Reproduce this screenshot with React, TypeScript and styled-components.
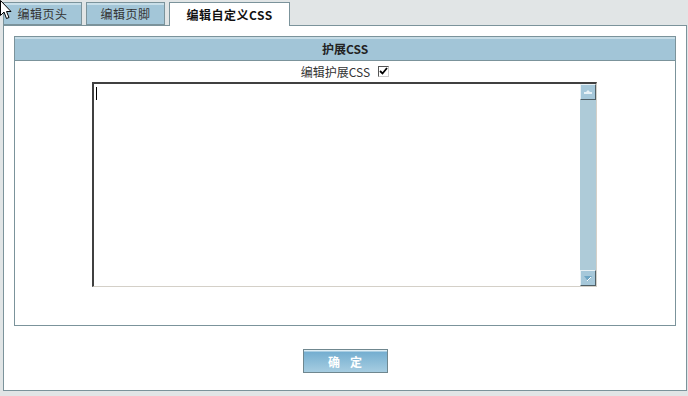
import React from "react";
import styled, { createGlobalStyle } from "styled-components";

const GlobalStyle = createGlobalStyle`
  html, body {
    margin: 0;
    padding: 0;
    background: #e1e5e6;
    font-family: "Noto Sans CJK SC", "DejaVu Sans", sans-serif;
    font-size: 12px;
    color: #222;
  }
`;

const Page = styled.div`
  position: relative;
  width: 688px;
  height: 396px;
  padding: 2px 0 0 3px;
  box-sizing: border-box;
`;

const TabBar = styled.div`
  display: flex;
  gap: 4px;
  height: 23px;
  position: relative;
  z-index: 1;
`;

const Tab = styled.div<{ active?: boolean; w: number }>`
  width: ${(p) => p.w}px;
  height: ${(p) => (p.active ? 24 : 23)}px;
  box-sizing: border-box;
  border: 1px solid #7b939b;
  border-bottom: ${(p) => (p.active ? "none" : "1px solid #7b939b")};
  background: ${(p) =>
    p.active ? "#fff" : "linear-gradient(#c9dfe9 0, #c9dfe9 2px, #a3c6d8 2px)"};
  display: flex;
  align-items: center;
  justify-content: center;
  font-size: 12px;
  font-weight: ${(p) => (p.active ? "bold" : "normal")};
  color: ${(p) => (p.active ? "#111" : "#333")};
  letter-spacing: 0.5px;
`;

const Panel = styled.div`
  width: 684px;
  height: 366px;
  box-sizing: border-box;
  border: 1px solid #7b939b;
  background: #fff;
  padding: 10px;
  display: flex;
  flex-direction: column;
`;

const Section = styled.div`
  height: 290px;
  box-sizing: border-box;
  border: 1px solid #7b939b;
  display: flex;
  flex-direction: column;
  align-items: center;
`;

const SectionHeader = styled.div`
  align-self: stretch;
  height: 24px;
  box-sizing: border-box;
  border-bottom: 1px solid #7b939b;
  background: linear-gradient(#c6dce6 0, #c6dce6 2px, #a2c5d7 2px);
  display: flex;
  align-items: center;
  justify-content: center;
  font-weight: bold;
  color: #222;
`;

const OptionRow = styled.label`
  height: 21px;
  display: flex;
  align-items: center;
  gap: 8px;
  color: #333;
`;

const Check = styled.span`
  width: 11px;
  height: 11px;
  box-sizing: border-box;
  border: 1px solid #555;
  border-right-color: #ccc;
  border-bottom-color: #ccc;
  background: #fff;
  display: flex;
  align-items: center;
  justify-content: center;
`;

const Editor = styled.div`
  width: 505px;
  height: 205px;
  box-sizing: border-box;
  border-top: 2px solid #404040;
  border-left: 2px solid #404040;
  border-right: 1px solid #d4d0c8;
  border-bottom: 1px solid #d4d0c8;
  display: flex;
  margin-right: 1px;
`;

const TextArea = styled.div`
  flex: 1;
  position: relative;
  background: #fff;
`;

const Caret = styled.span`
  position: absolute;
  left: 2px;
  top: 3px;
  width: 1px;
  height: 13px;
  background: #000;
`;

const ScrollBar = styled.div`
  width: 16px;
  background: #aecbd8;
  display: flex;
  flex-direction: column;
  justify-content: space-between;
`;

const ScrollButton = styled.div`
  width: 16px;
  height: 16px;
  box-sizing: border-box;
  border: 1px solid #4f5f66;
  border-top-color: #e8f1f5;
  border-left-color: #e8f1f5;
  background: #a6c8da;
  display: flex;
  align-items: center;
  justify-content: center;
`;

const Footer = styled.div`
  flex: 1;
  display: flex;
  justify-content: center;
  padding-top: 23px;
`;

const Button = styled.button`
  width: 85px;
  height: 24px;
  box-sizing: border-box;
  border: 1px solid #6f878f;
  background: linear-gradient(#dfeef5 0, #dfeef5 1px, #74aed0 2px, #a6cde1 100%);
  color: #fff;
  font-family: "Noto Sans CJK SC", sans-serif;
  font-weight: bold;
  font-size: 12px;
  letter-spacing: 10px;
  padding: 0 0 0 10px;
`;

const Cursor = styled.svg`
  position: absolute;
  left: 0;
  top: 0;
  z-index: 2;
`;

export default function App() {
  return (
    <>
      <GlobalStyle />
      <Page>
        <TabBar>
          <Tab w={79}>编辑页头</Tab>
          <Tab w={79}>编辑页脚</Tab>
          <Tab w={121} active>
            编辑自定义CSS
          </Tab>
        </TabBar>
        <Panel>
          <Section>
            <SectionHeader>护展CSS</SectionHeader>
            <OptionRow>
              编辑护展CSS
              <Check>
                <svg width="9" height="9" viewBox="0 0 9 9">
                  <path d="M1 4 L3.5 6.5 L8 1" fill="none" stroke="#000" strokeWidth="1.8" />
                </svg>
              </Check>
            </OptionRow>
            <Editor>
              <TextArea>
                <Caret />
              </TextArea>
              <ScrollBar>
                <ScrollButton>
                  <svg width="8" height="4" viewBox="0 0 8 4">
                    <rect x="0" y="2" width="8" height="2" fill="#e8f2f7" />
                    <path d="M2 2 L4 0 L6 2 Z" fill="#e8f2f7" />
                  </svg>
                </ScrollButton>
                <ScrollButton>
                  <svg width="8" height="5" viewBox="0 0 8 5">
                    <path d="M0 0 L8 0 L4 5 Z" fill="#6fa6c4" />
                    <path d="M3 5 L7 1" stroke="#fff" strokeWidth="1" />
                  </svg>
                </ScrollButton>
              </ScrollBar>
            </Editor>
          </Section>
          <Footer>
            <Button>确定</Button>
          </Footer>
        </Panel>
        <Cursor width="13" height="20" viewBox="0 0 13 20">
          <path d="M0.5 0.5 L0.5 15.5 L4 12 L6.5 18.5 L9 17.5 L6.5 11.5 L11 11.5 Z" fill="#fff" stroke="#000" strokeWidth="1" />
        </Cursor>
      </Page>
    </>
  );
}
